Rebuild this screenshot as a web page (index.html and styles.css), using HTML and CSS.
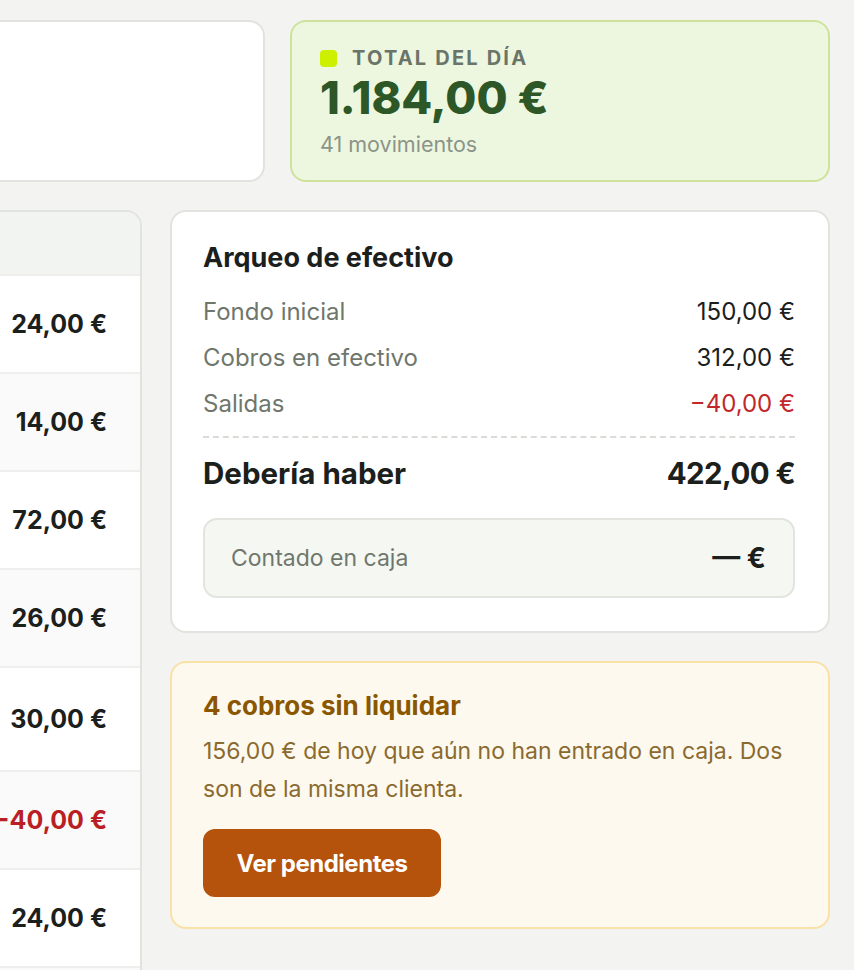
FILE: index.html
```html
<!DOCTYPE html>
<html lang="es">
<head>
<meta charset="utf-8">
<title>Caja del día</title>
<link rel="stylesheet" href="styles.css">
</head>
<body>
<div class="page">
  <div class="top-row">
    <section class="card card--blank"></section>
    <section class="card total">
      <div class="total__label"><span class="total__dot"></span>TOTAL DEL DÍA</div>
      <div class="total__amount">1.184,00 €</div>
      <div class="total__meta">41 movimientos</div>
    </section>
  </div>
  <div class="main-row">
    <section class="card table">
      <div class="table__head"></div>
      <div class="table__row"><span class="amount">24,00 €</span></div>
      <div class="table__row table__row--alt"><span class="amount">14,00 €</span></div>
      <div class="table__row"><span class="amount">72,00 €</span></div>
      <div class="table__row table__row--alt"><span class="amount">26,00 €</span></div>
      <div class="table__row table__row--tall"><span class="amount">30,00 €</span></div>
      <div class="table__row table__row--alt"><span class="amount amount--neg">−40,00 €</span></div>
      <div class="table__row"><span class="amount">24,00 €</span></div>
      <div class="table__row table__row--alt"></div>
    </section>
    <div class="side">
      <section class="card arqueo">
        <h2 class="arqueo__title">Arqueo de efectivo</h2>
        <div class="arqueo__rows">
          <div class="arqueo__row"><span class="muted">Fondo inicial</span><span>150,00 €</span></div>
          <div class="arqueo__row"><span class="muted">Cobros en efectivo</span><span>312,00 €</span></div>
          <div class="arqueo__row"><span class="muted">Salidas</span><span class="neg">−40,00 €</span></div>
        </div>
        <div class="arqueo__total"><span>Debería haber</span><span>422,00 €</span></div>
        <div class="counted"><span class="counted__label">Contado en caja</span><span class="counted__value">— €</span></div>
      </section>
      <section class="card alert">
        <h3 class="alert__title">4 cobros sin liquidar</h3>
        <p class="alert__text">156,00 € de hoy que aún no han entrado en caja. Dos son de la misma clienta.</p>
        <button class="alert__btn">Ver pendientes</button>
      </section>
    </div>
  </div>
</div>
</body>
</html>
```
FILE: styles.css
```css
* { box-sizing: border-box; }
html, body { margin: 0; padding: 0; }
body {
  background: #f3f3f1;
  font-family: Inter, "Noto Sans", sans-serif;
  color: #1b201c;
  width: 854px;
  height: 970px;
  overflow: hidden;
}
.page {
  margin-left: -300px;
  margin-right: 24px;
  padding-top: 20px;
}
.card {
  background: #fff;
  border: 2px solid #e1e3de;
  border-radius: 16px;
}
.top-row {
  display: flex;
  gap: 25px;
  height: 162px;
}
.card--blank { flex: 1; }
.total {
  width: 540px;
  background: #edf7e0;
  border-color: #cfe29c;
  padding: 24px 28px 22px 28px;
}
.total__label {
  display: flex;
  align-items: center;
  gap: 15px;
  font-size: 20px;
  line-height: 24px;
  font-weight: 700;
  letter-spacing: 0.11em;
  color: #6b7468;
}
.total__dot {
  width: 17px;
  height: 17px;
  border-radius: 4px;
  background: #ccf000;
}
.total__amount {
  font-size: 45px;
  line-height: 52px;
  font-weight: 800;
  color: #2d5727;
  margin-top: 2px;
}
.total__meta {
  margin-top: 6px;
  font-size: 21.5px;
  line-height: 28px;
  color: #8b9488;
}
.main-row {
  display: flex;
  gap: 28px;
  margin-top: 28px;
  align-items: flex-start;
}
.table {
  flex: 1;
  overflow: hidden;
  border-bottom: none;
  border-radius: 16px 16px 0 0;
}
.table__head {
  height: 62px;
  background: #f2f4f1;
}
.table__row {
  height: 98px;
  border-top: 2px solid #eeefec;
  display: flex;
  align-items: center;
  justify-content: flex-end;
  padding-right: 33px;
  background: #fff;
}
.table__row--alt { background: #fafafa; }
.table__row--tall { height: 104px; }
.amount {
  font-size: 25px;
  font-weight: 700;
  white-space: nowrap;
}
.amount--neg { color: #b91f24; }
.side {
  width: 660px;
  display: flex;
  flex-direction: column;
  gap: 28px;
}
.arqueo {
  padding: 30px 33px 33px 31px;
}
.arqueo__title {
  margin: 0;
  font-size: 27px;
  line-height: 32px;
  font-weight: 700;
}
.arqueo__rows {
  margin-top: 21px;
  display: flex;
  flex-direction: column;
  gap: 12px;
  padding-bottom: 15px;
  border-bottom: 2px dashed #dadcd7;
}
.arqueo__row {
  display: flex;
  justify-content: space-between;
  font-size: 24px;
  line-height: 34px;
  color: #1b201c;
}
.muted { color: #6f776c; }
.neg { color: #c0282b; }
.arqueo__total {
  margin-top: 17px;
  display: flex;
  justify-content: space-between;
  font-size: 29.5px;
  line-height: 36px;
  font-weight: 700;
}
.arqueo__total span:last-child { letter-spacing: -0.02em; }
.counted {
  margin-top: 27px;
  height: 80px;
  background: #f5f7f3;
  border: 2px solid #e1e5de;
  border-radius: 14px;
  display: flex;
  align-items: center;
  justify-content: space-between;
  padding: 0 27px 0 26px;
}
.counted__label {
  font-size: 23px;
  color: #6f776c;
}
.counted__value {
  font-size: 28px;
  font-weight: 700;
}
.alert {
  background: #fdf9ee;
  border-color: #f9e1a8;
  padding: 28px 33px 30px 31px;
}
.alert__title {
  margin: 0;
  font-size: 26px;
  line-height: 30px;
  font-weight: 700;
  color: #8a5600;
}
.alert__text {
  margin: 11px 0 0;
  font-size: 23px;
  line-height: 38px;
  color: #8a6a2e;
}
.alert__btn {
  display: block;
  margin-top: 21px;
  height: 68px;
  width: 238px;
  padding: 0;
  border: none;
  border-radius: 12px;
  background: #b5520b;
  color: #fff;
  font-family: inherit;
  font-size: 24px;
  font-weight: 700;
  letter-spacing: -0.02em;
}
```
